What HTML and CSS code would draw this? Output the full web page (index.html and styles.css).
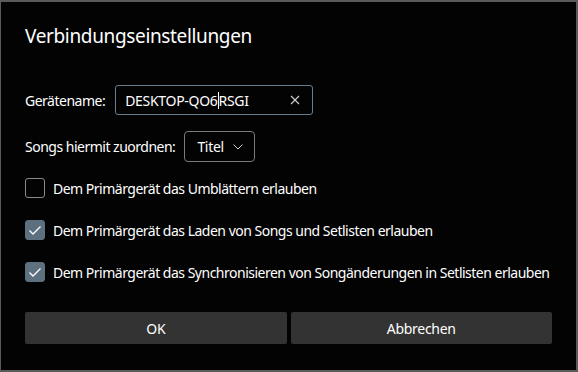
FILE: index.html
```html
<!DOCTYPE html>
<html lang="de">
<head>
<meta charset="utf-8">
<link rel="stylesheet" href="styles.css">
</head>
<body>
<div class="dialog">
  <h1 class="title">Verbindungseinstellungen</h1>
  <div class="row name-row">
    <span class="label">Gerätename:</span>
    <div class="input">
      <span class="value">DESKTOP-QO6<span class="caret"></span>RSGI</span>
      <svg class="clear" width="10" height="10" viewBox="0 0 10 10"><path d="M1 1L9 9M9 1L1 9" stroke="#d0d0d0" stroke-width="1.1" fill="none"/></svg>
    </div>
  </div>
  <div class="row map-row">
    <span class="label">Songs hiermit zuordnen:</span>
    <div class="select">
      <span>Titel</span>
      <svg class="chev" width="10" height="6" viewBox="0 0 10 6"><path d="M0.5 0.5L5 5L9.5 0.5" stroke="#cfcfcf" stroke-width="1" fill="none"/></svg>
    </div>
  </div>
  <div class="check-row first">
    <span class="box"></span>
    <span class="ctext">Dem Primärgerät das Umblättern erlauben</span>
  </div>
  <div class="check-row">
    <span class="box checked"><svg width="14" height="11" viewBox="0 0 14 11"><path d="M1.5 5.5L5 9L12.5 1.5" stroke="#fff" stroke-width="1.3" fill="none"/></svg></span>
    <span class="ctext">Dem Primärgerät das Laden von Songs und Setlisten erlauben</span>
  </div>
  <div class="check-row">
    <span class="box checked"><svg width="14" height="11" viewBox="0 0 14 11"><path d="M1.5 5.5L5 9L12.5 1.5" stroke="#fff" stroke-width="1.3" fill="none"/></svg></span>
    <span class="ctext">Dem Primärgerät das Synchronisieren von Songänderungen in Setlisten erlauben</span>
  </div>
  <div class="buttons">
    <button class="btn">OK</button>
    <button class="btn">Abbrechen</button>
  </div>
</div>
</body>
</html>
```
FILE: styles.css
```css
html, body {
  margin: 0;
  padding: 0;
  background: #5a5a5a;
}
body {
  width: 578px;
  height: 372px;
  box-sizing: border-box;
  padding: 2px 2px 2px 1px;
  font-family: "Noto Sans", "Open Sans", sans-serif;
  color: #fff;
}
.dialog {
  background: #030303;
  height: 100%;
  box-sizing: border-box;
  padding: 20px 24px 0 24px;
}
.title {
  margin: 0;
  font-weight: 400;
  font-size: 19px;
  line-height: 28px;
  letter-spacing: -0.35px;
}
.row {
  display: flex;
  align-items: center;
  font-size: 14px;
}
.name-row {
  margin-top: 35px;
}
.label {
  letter-spacing: -0.5px;
}
.input {
  margin-left: 10px;
  width: 198px;
  height: 30px;
  box-sizing: border-box;
  border: 1px solid #6a7d8c;
  border-radius: 3px;
  display: flex;
  align-items: center;
  padding: 0 12px 0 9px;
  font-size: 14px;
}
.value {
  flex: 1;
  letter-spacing: -0.3px;
}
.caret {
  display: inline-block;
  width: 1px;
  height: 17px;
  background: #fff;
  vertical-align: -3px;
}
.map-row {
  margin-top: 16px;
}
.select {
  margin-left: 9px;
  width: 71px;
  height: 31px;
  box-sizing: border-box;
  border: 1px solid #7a7a7a;
  border-radius: 4px;
  display: flex;
  align-items: center;
  padding: 0 11px 0 12px;
  justify-content: space-between;
  letter-spacing: -0.3px;
}
.check-row {
  display: flex;
  align-items: center;
  font-size: 14px;
  margin-top: 22px;
  letter-spacing: -0.5px;
  white-space: nowrap;
}
.check-row.first {
  margin-top: 16px;
}
.box {
  width: 20px;
  height: 20px;
  box-sizing: border-box;
  border: 1px solid #8a8a8a;
  border-radius: 3px;
  margin-right: 8px;
  display: flex;
  align-items: center;
  justify-content: center;
  flex: none;
}
.box.checked {
  background: #5d7080;
  border-color: #5d7080;
}
.buttons {
  display: grid;
  grid-template-columns: 1fr 1fr;
  gap: 4px;
  margin-top: 30px;
}
.btn {
  height: 32px;
  background: #333333;
  color: #fff;
  border: none;
  border-radius: 2px;
  font-family: inherit;
  font-size: 14px;
  letter-spacing: -0.3px;
}
```
